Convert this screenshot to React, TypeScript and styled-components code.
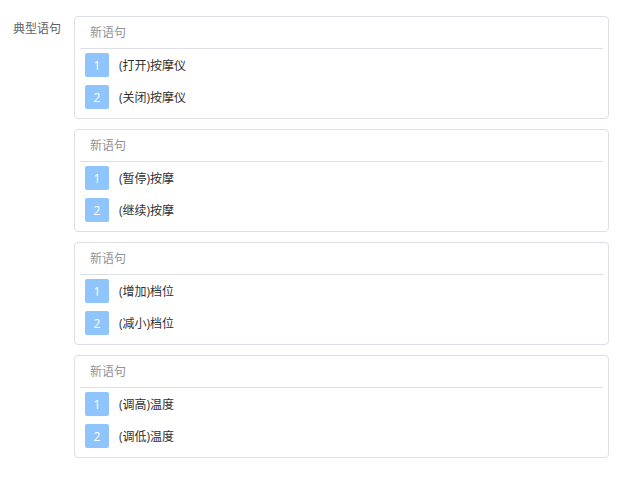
import React from 'react';
import styled, { createGlobalStyle } from 'styled-components';

const GlobalStyle = createGlobalStyle`
    body {
        margin: 0;
        background: #fff;
        font-family: "Open Sans", "Noto Sans CJK SC", sans-serif;
        font-size: 12px;
    }
`;

const Page = styled.div`
    display: flex;
    align-items: flex-start;
    padding: 16px 0 0 13px;
`;

const Label = styled.div`
    width: 61px;
    flex-shrink: 0;
    line-height: 26px;
    color: #606266;
`;

const CardList = styled.div`
    display: flex;
    flex-direction: column;
    gap: 10px;
    width: 535px;
`;

const Card = styled.div`
    border: 1px solid #dcdfe6;
    border-radius: 4px;
    padding: 0 5px 5px;
`;

const SentenceInput = styled.div`
    height: 31px;
    line-height: 31px;
    padding-left: 10px;
    border-bottom: 1px solid #dcdfe6;
    color: #909399;
`;

const Row = styled.div`
    display: flex;
    align-items: center;
    gap: 10px;
    height: 32px;
    padding-left: 5px;
    color: #303133;
`;

const Badge = styled.span`
    display: flex;
    align-items: center;
    justify-content: center;
    width: 24px;
    height: 24px;
    border-radius: 2px;
    background: #90c4fd;
    color: #fff;
`;

const groups = [
    ['(打开)按摩仪', '(关闭)按摩仪'],
    ['(暂停)按摩', '(继续)按摩'],
    ['(增加)档位', '(减小)档位'],
    ['(调高)温度', '(调低)温度'],
];

const App = () => (
    <>
        <GlobalStyle />
        <Page>
            <Label>典型语句</Label>
            <CardList>
                {groups.map((items, i) => (
                    <Card key={i}>
                        <SentenceInput>新语句</SentenceInput>
                        {items.map((text, j) => (
                            <Row key={text}>
                                <Badge>{j + 1}</Badge>
                                {text}
                            </Row>
                        ))}
                    </Card>
                ))}
            </CardList>
        </Page>
    </>
);

export default App;
